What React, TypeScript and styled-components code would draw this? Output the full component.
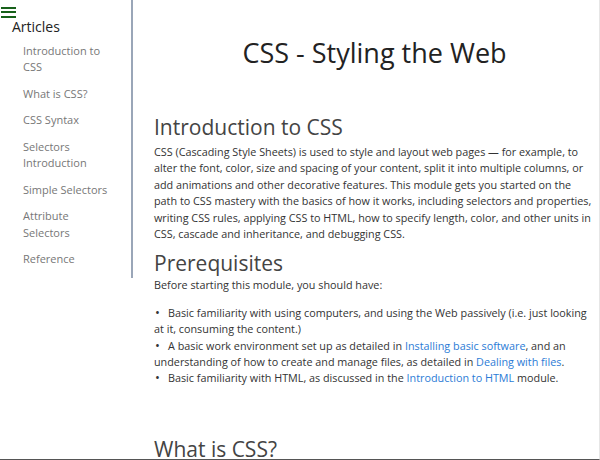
import React from "react";
import styled, { createGlobalStyle } from "styled-components";

const Global = createGlobalStyle`
  html, body { margin: 0; padding: 0; background: #fff; }
  body { font-family: "Open Sans", "Liberation Sans", sans-serif; color: #333; overflow: hidden; }
  #root { height: 460px; }
`;

const Frame = styled.div`
  width: 600px;
  height: 460px;
  box-sizing: border-box;
  border-right: 1px solid #e6e6e6;
  border-bottom: 1px solid #555;
  display: flex;
  align-items: flex-start;
  overflow: hidden;
`;

const Sidebar = styled.nav`
  width: 131px;
  flex: none;
  border-right: 2px solid #9aa6b8;
  box-sizing: content-box;
`;

const Burger = styled.div`
  display: flex;
  flex-direction: column;
  gap: 2.5px;
  width: 15px;
  padding: 6.5px 0 0 1px;
  span { display: block; height: 2px; background: #17611a; }
`;

const SideTitle = styled.div`
  font-size: 14px;
  color: #222;
  padding-left: 12px;
  line-height: 18px;
  margin-top: 0;
`;

const SideList = styled.ul`
  list-style: none;
  margin: 7px 0 0;
  padding: 0 20px 0 23px;
`;

const SideItem = styled.li`
  font-size: 11px;
  line-height: 16.5px;
  color: #777;
  margin-bottom: 10px;
`;

const Main = styled.main`
  flex: 1;
  padding: 0 4px 0 21px;
`;

const Title = styled.h1`
  font-size: 27px;
  font-weight: 400;
  color: #222;
  text-align: center;
  margin: 35px 0 0;
  line-height: 36px;
`;

const H2 = styled.h2<{ $top: number }>`
  font-size: 21px;
  font-weight: 400;
  color: #444;
  margin: ${(p) => p.$top}px 0 0;
  line-height: 28px;
`;

const P = styled.p<{ $top: number }>`
  font-size: 10.8px;
  line-height: 16.4px;
  margin: ${(p) => p.$top}px 0 0;
`;

const List = styled.ul`
  list-style: none;
  margin: 11px 0 0;
  padding: 0;
`;

const Item = styled.li`
  font-size: 10.8px;
  line-height: 16.4px;
  &::before {
    content: "•";
    display: inline-block;
    width: 14px;
    font-size: 13px;
    line-height: 10px;
    padding-left: 1px;
    box-sizing: border-box;
  }
`;

const A = styled.a`
  color: #2b7bd6;
  text-decoration: none;
`;

const nav = [
  "Introduction to CSS",
  "What is CSS?",
  "CSS Syntax",
  "Selectors Introduction",
  "Simple Selectors",
  "Attribute Selectors",
  "Reference",
];

export default function App() {
  return (
    <>
      <Global />
      <Frame>
        <Sidebar>
          <Burger>
            <span />
            <span />
            <span />
          </Burger>
          <SideTitle>Articles</SideTitle>
          <SideList>
            {nav.map((n) => (
              <SideItem key={n}>{n}</SideItem>
            ))}
          </SideList>
        </Sidebar>
        <Main>
          <Title>CSS - Styling the Web</Title>
          <H2 $top={42}>Introduction to CSS</H2>
          <P $top={3}>
            CSS (Cascading Style Sheets) is used to style and layout web pages — for example, to
            alter the font, color, size and spacing of your content, split it into multiple columns, or
            add animations and other decorative features. This module gets you started on the
            path to CSS mastery with the basics of how it works, including selectors and properties,
            writing CSS rules, applying CSS to HTML, how to specify length, color, and other units in
            CSS, cascade and inheritance, and debugging CSS.
          </P>
          <H2 $top={7}>Prerequisites</H2>
          <P $top={0}>Before starting this module, you should have:</P>
          <List>
            <Item>
              Basic familiarity with using computers, and using the Web passively (i.e. just looking
              at it, consuming the content.)
            </Item>
            <Item>
              A basic work environment set up as detailed in <A>Installing basic software</A>, and an
              understanding of how to create and manage files, as detailed in <A>Dealing with files</A>.
            </Item>
            <Item>
              Basic familiarity with HTML, as discussed in the <A>Introduction to HTML</A> module.
            </Item>
          </List>
          <H2 $top={48}>What is CSS?</H2>
        </Main>
      </Frame>
    </>
  );
}
